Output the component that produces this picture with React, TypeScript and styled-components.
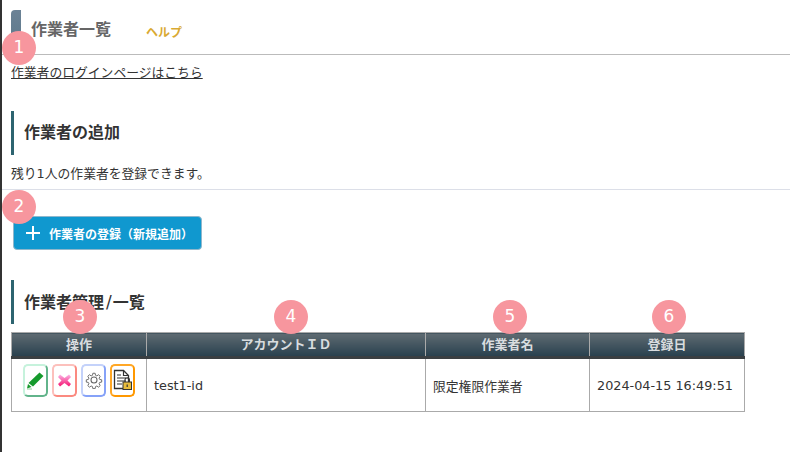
import React from 'react';
import styled, { createGlobalStyle } from 'styled-components';

const GlobalStyle = createGlobalStyle`
  html, body {
    margin: 0;
    padding: 0;
    background: #fff;
  }

  body {
    font-family: "DejaVu Sans", "Noto Sans CJK JP", sans-serif;
    color: #333;
    font-size: 12.8px;
  }
`;

const Page = styled.div`
  position: relative;
  box-sizing: border-box;
  width: 790px;
  height: 452px;
  overflow: hidden;
  border-left: 2px solid #333;
  padding-top: 10px;
`;

const TabBar = styled.div`
  display: flex;
  align-items: flex-start;
  height: 44px;
  padding-left: 9px;
  border-bottom: 1px solid #bbb;
`;

const TabMarker = styled.div`
  width: 10px;
  height: 32px;
  border-radius: 4px 0 0 0;
  background: linear-gradient(#6b8296, #5f7a8c);
`;

const TabTitle = styled.div`
  margin: 9px 0 0 10px;
  font-size: 16px;
  line-height: 22px;
  font-weight: bold;
  color: #666;
`;

const HelpLink = styled.a`
  margin: 12px 0 0 35px;
  font-size: 12px;
  line-height: 22px;
  font-weight: bold;
  color: #d9a932;
`;

const LoginLink = styled.a`
  display: inline-block;
  margin: 9px 0 0 9px;
  font-size: 12.8px;
  line-height: 18px;
  color: #333;
  text-decoration: underline;
`;

const SectionHeading = styled.h2<{ $top: number }>`
  margin: ${props => props.$top}px 0 0 9px;
  height: 44px;
  padding-left: 10px;
  border-left: 3px solid #2d6470;
  font-size: 16px;
  line-height: 44px;
  font-weight: bold;
  color: #333;
`;

const Slash = styled.span`
  padding: 0 1px 0 2px;
  font-size: 17px;
  font-weight: normal;
`;

const Remaining = styled.p`
  margin: 10px 0 0;
  padding: 0 0 6px 9px;
  font-size: 12.8px;
  line-height: 18px;
  color: #333;
  border-bottom: 1px solid #dcdfe8;
`;

const AddButton = styled.button`
  display: flex;
  align-items: center;
  box-sizing: border-box;
  width: 189px;
  height: 34px;
  margin: 26px 0 0 11px;
  padding: 0 0 0 12px;
  border: 1px solid #8fb7cc;
  border-radius: 4px;
  background: #1098cf;
  color: #fff;
  font-family: inherit;
  font-size: 12px;
  font-weight: bold;
  white-space: nowrap;

  svg {
    margin-right: 9px;
    flex: none;
  }
`;

const OperatorTable = styled.table`
  width: 733px;
  margin: 8px 0 0 9px;
  border-collapse: collapse;
  table-layout: fixed;

  th, td {
    border: 1px solid #aaa;
    padding: 0;
  }
`;

const HeadCell = styled.th<{ $width: number }>`
  width: ${props => props.$width}px;
  height: 25px;
  box-sizing: border-box;
  background: linear-gradient(#5f6b72, #28404e);
  border-bottom: 3px solid #3a3f42 !important;
  color: #d8dcdf;
  font-size: 13px;
  font-weight: bold;
  line-height: 22px;
  text-align: center;
`;

const BodyCell = styled.td`
  height: 52px;
  padding-left: 7px !important;
  font-size: 12.8px;
  color: #333;
`;

const ActionList = styled.div`
  display: flex;
  gap: 4px;
  margin: -10px 0 0 4px;
`;

const ActionButton = styled.div<{ $top: string; $bottom: string }>`
  display: flex;
  align-items: center;
  justify-content: center;
  box-sizing: border-box;
  width: 25px;
  height: 33px;
  border: 2px solid ${props => props.$bottom};
  border-top-color: ${props => props.$top};
  border-left-color: ${props => props.$top};
  border-radius: 5px;
  background: #fff;
`;

const Badge = styled.div<{ $x: number; $y: number }>`
  position: absolute;
  left: ${props => props.$x - 19}px;
  top: ${props => props.$y - 17}px;
  width: 34px;
  height: 34px;
  border-radius: 50%;
  background: #f7969e;
  color: #fff;
  font-size: 17px;
  line-height: 33px;
  text-align: center;
`;

const PencilIcon = () => (
  <svg width="19" height="19" viewBox="0 0 19 19">
    <path d="M13.5 1.5l4 3.5L7 15.5l-4.5-3.5z" fill="#159a2c" />
    <path d="M2 13l3.5 3-4.5 1.5z" fill="#159a2c" />
    <path d="M1 18h5" stroke="#8ed09a" strokeWidth="1" />
  </svg>
);

const CrossIcon = () => (
  <svg width="15" height="15" viewBox="0 0 15 15">
    <defs>
      <linearGradient id="crossFill" x1="0" y1="0" x2="0" y2="1">
        <stop offset="0" stopColor="#fbb4e6" />
        <stop offset="1" stopColor="#f6136f" />
      </linearGradient>
    </defs>
    <path
      d="M3 1.5l4.5 3.5 4.5-3.5 2 2.5-3.5 3.5 3.5 3.5-2 2.5-4.5-3.5-4.5 3.5-2-2.5 3.5-3.5-3.5-3.5z"
      fill="url(#crossFill)"
    />
  </svg>
);

const GearIcon = () => (
  <svg width="18" height="18" viewBox="0 0 24 24" fill="none" stroke="#666" strokeWidth="1.4">
    <circle cx="12" cy="12" r="4" />
    <path d="M10.3 2h3.4l.5 3 2 .9 2.6-1.7 2.4 2.4-1.7 2.6.9 2 3 .5v3.4l-3 .5-.9 2 1.7 2.6-2.4 2.4-2.6-1.7-2 .9-.5 3h-3.4l-.5-3-2-.9-2.6 1.7-2.4-2.4 1.7-2.6-.9-2-3-.5v-3.4l3-.5.9-2-1.7-2.6 2.4-2.4 2.6 1.7 2-.9z" transform="translate(1.2 1.2) scale(.9)" />
  </svg>
);

const LockedFileIcon = () => (
  <svg width="20" height="22" viewBox="0 0 20 22" fill="none">
    <path d="M1.5 1.5h9l5 5v13h-14z" fill="#fff" stroke="#333" strokeWidth="1.3" />
    <path d="M10.5 1.5v5h5M4 6h4M4 9h9M4 12h9M4 15h5" stroke="#333" strokeWidth="1.2" />
    <rect x="10" y="13" width="8.5" height="7.5" fill="#e8bc3c" stroke="#333" strokeWidth="1" />
    <path d="M12 13v-2a2.2 2.2 0 0 1 4.4 0v2" stroke="#333" strokeWidth="1.2" />
    <path d="M14.2 15.5v2.5" stroke="#333" strokeWidth="1.2" />
  </svg>
);

const actions = [
  { top: '#c6f2dc', bottom: '#62b48b', icon: <PencilIcon /> },
  { top: '#fcc0bc', bottom: '#fb8a80', icon: <CrossIcon /> },
  { top: '#c4d2fa', bottom: '#86a2f8', icon: <GearIcon /> },
  { top: '#ffa726', bottom: '#ff9800', icon: <LockedFileIcon /> },
];

const badges = [
  { label: '1', x: 19, y: 48 },
  { label: '2', x: 19, y: 207 },
  { label: '3', x: 80, y: 317 },
  { label: '4', x: 291, y: 317 },
  { label: '5', x: 510, y: 317 },
  { label: '6', x: 669, y: 317 },
];

export default function App() {
  return (
    <>
      <GlobalStyle />
      <Page>
        <TabBar>
          <TabMarker />
          <TabTitle>作業者一覧</TabTitle>
          <HelpLink>ヘルプ</HelpLink>
        </TabBar>
        <LoginLink>作業者のログインページはこちら</LoginLink>

        <SectionHeading $top={29}>作業者の追加</SectionHeading>
        <Remaining>残り1人の作業者を登録できます。</Remaining>
        <AddButton>
          <svg width="14" height="14" viewBox="0 0 14 14">
            <path d="M7 0v14M0 7h14" stroke="#fff" strokeWidth="2" />
          </svg>
          作業者の登録（新規追加）
        </AddButton>

        <SectionHeading $top={30}>作業者管理<Slash>/</Slash>一覧</SectionHeading>
        <OperatorTable>
          <thead>
            <tr>
              <HeadCell $width={135}>操作</HeadCell>
              <HeadCell $width={279}>アカウントＩＤ</HeadCell>
              <HeadCell $width={164}>作業者名</HeadCell>
              <HeadCell $width={155}>登録日</HeadCell>
            </tr>
          </thead>
          <tbody>
            <tr>
              <BodyCell>
                <ActionList>
                  {actions.map(action => (
                    <ActionButton key={action.bottom} $top={action.top} $bottom={action.bottom}>
                      {action.icon}
                    </ActionButton>
                  ))}
                </ActionList>
              </BodyCell>
              <BodyCell>test1-id</BodyCell>
              <BodyCell>限定権限作業者</BodyCell>
              <BodyCell>2024-04-15 16:49:51</BodyCell>
            </tr>
          </tbody>
        </OperatorTable>

        {badges.map(badge => (
          <Badge key={badge.label} $x={badge.x} $y={badge.y}>
            {badge.label}
          </Badge>
        ))}
      </Page>
    </>
  );
}
